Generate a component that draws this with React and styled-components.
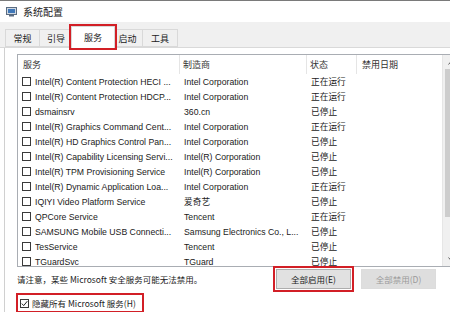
import styled, { createGlobalStyle } from "styled-components";

const GlobalStyle = createGlobalStyle`
  html, body {
    margin: 0;
    padding: 0;
    background: #fff;
  }
  body {
    width: 450px;
    height: 312px;
    overflow: hidden;
    font-family: "Liberation Sans", "Noto Sans CJK SC", sans-serif;
    color: #1a1a1a;
  }
`;

const services = [
  ["Intel(R) Content Protection HECI ...", "Intel Corporation", "正在运行"],
  ["Intel(R) Content Protection HDCP...", "Intel Corporation", "正在运行"],
  ["dsmainsrv", "360.cn", "已停止"],
  ["Intel(R) Graphics Command Cent...", "Intel Corporation", "正在运行"],
  ["Intel(R) HD Graphics Control Pan...", "Intel Corporation", "已停止"],
  ["Intel(R) Capability Licensing Servi...", "Intel(R) Corporation", "已停止"],
  ["Intel(R) TPM Provisioning Service", "Intel(R) Corporation", "已停止"],
  ["Intel(R) Dynamic Application Loa...", "Intel Corporation", "正在运行"],
  ["IQIYI Video Platform Service", "爱奇艺", "已停止"],
  ["QPCore Service", "Tencent", "正在运行"],
  ["SAMSUNG Mobile USB Connecti...", "Samsung Electronics Co., L...", "已停止"],
  ["TesService", "Tencent", "已停止"],
  ["TGuardSvc", "TGuard", "已停止"],
];

const tabs = [
  { label: "常规", width: 35 },
  { label: "引导", width: 33 },
  { label: "服务", width: 40, active: true },
  { label: "启动", width: 30 },
  { label: "工具", width: 35 },
];

function App() {
  return (
    <>
      <GlobalStyle />
      <Window>
        <TitleBar>
          <AppIcon />
          <Title>系统配置</Title>
        </TitleBar>
        <TabStrip>
          {tabs.map((t) => (
            <Tab key={t.label} $active={t.active} $width={t.width}>
              {t.label}
            </Tab>
          ))}
        </TabStrip>
        <Panel>
          <ListBox>
            <Table>
              <HeaderRow>
                <HeadCell $first>服务</HeadCell>
                <HeadCell>制造商</HeadCell>
                <HeadCell>状态</HeadCell>
                <HeadCell $pad={5}>禁用日期</HeadCell>
              </HeaderRow>
              {services.map(([name, maker, status]) => (
                <Row key={name}>
                  <NameCell>
                    <Check />
                    <span>{name}</span>
                  </NameCell>
                  <Cell>{maker}</Cell>
                  <Cell>{status}</Cell>
                  <Cell />
                </Row>
              ))}
            </Table>
            <Scrollbar>
              <Arrow>
                <svg width="7" height="5" viewBox="0 0 7 5">
                  <path d="M0.5 4.5 L3.5 1 L6.5 4.5" fill="none" stroke="#606060" strokeWidth="1" />
                </svg>
              </Arrow>
              <Thumb />
              <Track />
              <Arrow>
                <svg width="7" height="5" viewBox="0 0 7 5">
                  <path d="M0.5 0.5 L3.5 4 L6.5 0.5" fill="none" stroke="#606060" strokeWidth="1" />
                </svg>
              </Arrow>
            </Scrollbar>
          </ListBox>
          <Footer>
            <Notice>请注意，某些 Microsoft 安全服务可能无法禁用。</Notice>
            <Button $marked>全部启用(E)</Button>
            <Button $faded>全部禁用(D)</Button>
          </Footer>
          <HideRow>
            <Check $checked>
              <svg width="7" height="7" viewBox="0 0 7 7">
                <path d="M0.8 3.6 L2.7 5.6 L6.3 1.2" fill="none" stroke="#222" strokeWidth="1" />
              </svg>
            </Check>
            <span>隐藏所有 Microsoft 服务(H)</span>
          </HideRow>
        </Panel>
      </Window>
    </>
  );
}

function AppIcon() {
  return (
    <svg width="11" height="10" viewBox="0 0 11 10">
      <rect x="0.5" y="0.5" width="10" height="7" fill="#cfd8e3" stroke="#5a6b80" />
      <rect x="2" y="2" width="7" height="4" fill="#3f77b8" />
      <rect x="3" y="8" width="5" height="1.5" fill="#5a6b80" />
    </svg>
  );
}

const Window = styled.div`
  display: flex;
  flex-direction: column;
  width: 450px;
  height: 312px;
  border-top: 1px solid #7a7a7a;
  box-sizing: border-box;
`;

const TitleBar = styled.div`
  height: 21px;
  display: flex;
  align-items: center;
  gap: 6px;
  padding-left: 6px;
  background: #fff;
`;

const Title = styled.div`
  font-family: "Noto Sans CJK SC", sans-serif;
  font-size: 10px;
  color: #222;
`;

const TabStrip = styled.div`
  height: 26px;
  display: flex;
  align-items: flex-end;
  padding-left: 5px;
  background: #f0f0f0;
  border-bottom: 1px solid #d9d9d9;
  box-sizing: border-box;
`;

const Tab = styled.div`
  font-family: "Noto Sans CJK SC", sans-serif;
  font-size: 9px;
  display: flex;
  align-items: center;
  justify-content: center;
  box-sizing: border-box;
  width: ${(p) => p.$width + (p.$active ? 4 : 0)}px;
  height: ${(p) => (p.$active ? "22px" : "18px")};
  margin: 0 ${(p) => (p.$active ? "-2px" : "0")} ${(p) => (p.$active ? "-1px" : "0")};
  background: ${(p) => (p.$active ? "#fff" : "#f0f0f0")};
  border: 1px solid #d9d9d9;
  border-bottom: ${(p) => (p.$active ? "none" : "1px solid #d9d9d9")};
  border-left-width: ${(p) => (p.$active ? "1px" : "0")};
  position: relative;
  z-index: ${(p) => (p.$active ? 1 : 0)};
  outline: ${(p) => (p.$active ? "2px solid #d21f26" : "none")};
  outline-offset: 0;
  color: #222;
  &:first-child {
    border-left-width: 1px;
  }
`;

const Panel = styled.div`
  flex: 1;
  background: #fff;
  margin-left: 4px;
  border-left: 1px solid #d0d0d0;
  padding: 6px 0 0 12px;
  display: flex;
  flex-direction: column;
  overflow: hidden;
`;

const ListBox = styled.div`
  display: flex;
  width: 444px;
  height: 213px;
  flex-shrink: 0;
  border: 1px solid #a9adb3;
  box-sizing: border-box;
`;

const Table = styled.div`
  flex: 1;
  overflow: hidden;
  display: flex;
  flex-direction: column;
`;

const HeaderRow = styled.div`
  display: grid;
  grid-template-columns: 162px 127px 50px 86px;
  height: 19px;
  flex-shrink: 0;
`;

const HeadCell = styled.div`
  font-family: "Noto Sans CJK SC", sans-serif;
  font-size: 9px;
  color: #333;
  display: flex;
  align-items: center;
  padding-left: ${(p) => (p.$first ? 5 : p.$pad || 3)}px;
  border-right: 1px solid #e5e5e5;
`;

const Row = styled.div`
  display: grid;
  grid-template-columns: 162px 127px 50px 86px;
  height: 15px;
  flex-shrink: 0;
  font-size: 8.7px;
`;

const Cell = styled.div`
  display: flex;
  align-items: center;
  padding-left: 4px;
  white-space: nowrap;
  overflow: hidden;
`;

const NameCell = styled(Cell)`
  gap: 4px;
  padding-left: 4px;
`;

const Check = styled.div`
  width: 9px;
  height: 9px;
  border: 1px solid #3a3a3a;
  box-sizing: border-box;
  flex-shrink: 0;
  display: flex;
  align-items: center;
  justify-content: center;
  background: #fff;
`;

const Scrollbar = styled.div`
  width: 17px;
  display: flex;
  flex-direction: column;
  background: #f0f0f0;
  border-left: 1px solid #e6e6e6;
`;

const Arrow = styled.div`
  height: 14px;
  display: flex;
  align-items: center;
  justify-content: center;
`;

const Thumb = styled.div`
  height: 148px;
  margin: 0 2px;
  background: #cdcdcd;
`;

const Track = styled.div`
  flex: 1;
`;

const Footer = styled.div`
  display: flex;
  align-items: center;
  height: 23px;
  gap: 14px;
`;

const Notice = styled.div`
  font-family: "Noto Sans CJK SC", sans-serif;
  font-size: 8.5px;
  color: #222;
  width: 245px;
  padding-top: 2px;
`;

const Button = styled.div`
  width: 75px;
  height: 20px;
  margin-top: 2px;
  box-sizing: border-box;
  display: flex;
  align-items: center;
  justify-content: center;
  font-family: "Noto Sans CJK SC", sans-serif;
  font-size: 8.5px;
  background: ${(p) => (p.$faded ? "#dedede" : "#e1e1e1")};
  border: 1px solid ${(p) => (p.$faded ? "#dcdcdc" : "#adadad")};
  color: ${(p) => (p.$faded ? "#9a9a9a" : "#222")};
  outline: ${(p) => (p.$marked ? "2px solid #d21f26" : "none")};
  outline-offset: 1px;
  margin-left: ${(p) => (p.$faded ? "-4px" : "0")};
`;

const HideRow = styled.div`
  display: flex;
  align-items: center;
  gap: 3px;
  align-self: flex-start;
  margin-top: 4px;
  margin-left: -1px;
  padding: 2px 6px 2px 2px;
  border: 2px solid #d21f26;
  font-family: "Noto Sans CJK SC", sans-serif;
  font-size: 8.5px;
  color: #222;
`;

export default App;
